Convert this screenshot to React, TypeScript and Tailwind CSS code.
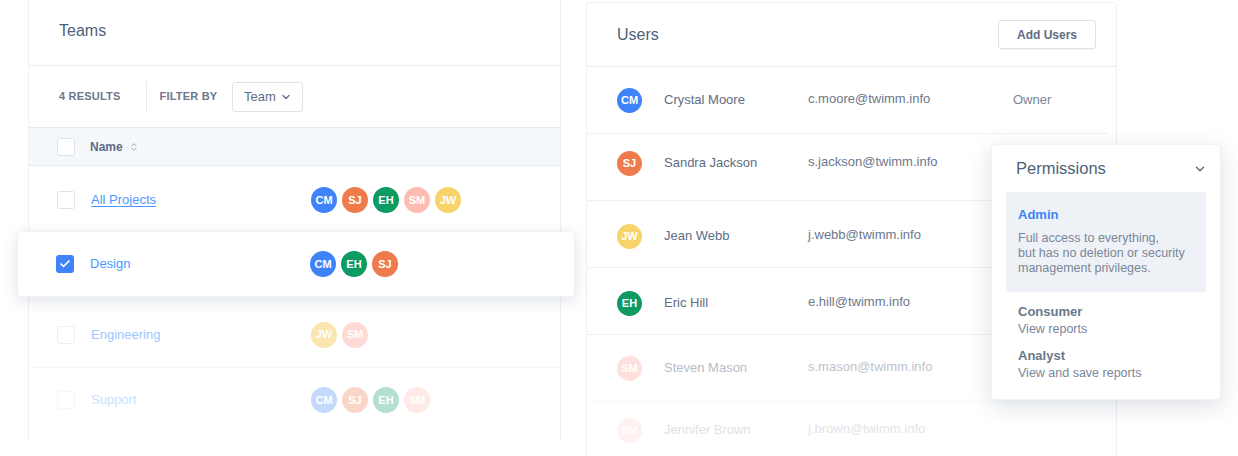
import { Check, ChevronDown, ChevronsUpDown } from "lucide-react";

type Person = { initials: string; color: string };

const people: Record<string, Person> = {
  CM: { initials: "CM", color: "bg-[#3f83f8]" },
  SJ: { initials: "SJ", color: "bg-[#ef7b4d]" },
  EH: { initials: "EH", color: "bg-[#0d9a63]" },
  SM: { initials: "SM", color: "bg-[#ffbcb2]" },
  JW: { initials: "JW", color: "bg-[#f7d36c]" },
};

const Avatar = ({ id, size = "lg" }: { id: string; size?: "lg" | "md" }) => {
  const p = people[id];
  return (
    <div
      className={`${p.color} ${size === "lg" ? "w-[26px] h-[26px]" : "w-[25px] h-[25px]"} rounded-full flex items-center justify-center text-white text-[11px] font-bold shrink-0`}
    >
      {p.initials}
    </div>
  );
};

const Checkbox = ({ checked = false }: { checked?: boolean }) =>
  checked ? (
    <div className="w-[18px] h-[18px] rounded-[3px] bg-[#3f83f8] flex items-center justify-center">
      <Check className="w-[12px] h-[12px] text-white" strokeWidth={3.5} />
    </div>
  ) : (
    <div className="w-[18px] h-[18px] rounded-[3px] border border-[#dde3ea] bg-white" />
  );

const teams = [
  { name: "All Projects", members: ["CM", "SJ", "EH", "SM", "JW"], link: true },
  { name: "Design", members: ["CM", "EH", "SJ"], selected: true },
  { name: "Engineering", members: ["JW", "SM"] },
  { name: "Support", members: ["CM", "SJ", "EH", "SM"] },
];

const users = [
  { id: "CM", name: "Crystal Moore", email: "c.moore@twimm.info", role: "Owner", fade: "", pos: "" },
  { id: "SJ", name: "Sandra Jackson", email: "s.jackson@twimm.info", role: "", fade: "", pos: "-translate-y-[4px]" },
  { id: "JW", name: "Jean Webb", email: "j.webb@twimm.info", role: "", fade: "", pos: "translate-y-[2px]" },
  { id: "EH", name: "Eric Hill", email: "e.hill@twimm.info", role: "", fade: "", pos: "translate-y-[2px]" },
  { id: "SM", name: "Steven Mason", email: "s.mason@twimm.info", role: "", fade: "opacity-45", pos: "" },
  { id: "SM", name: "Jennifer Brown", email: "j.brown@twimm.info", role: "", fade: "opacity-20", pos: "-translate-y-[5px]" },
];

const TeamsPanel = () => (
  <div className="ml-[28px] w-[533px] h-[440px] border-x border-[#eef1f5] bg-white shrink-0">
    <div className="h-[66px] border-b border-[#e8edf3] pl-[30px] pt-[21px]">
      <h2 className="text-[16px] text-[#505f79] leading-[20px]">Teams</h2>
    </div>
    <div className="h-[61px] flex items-center pl-[30px]">
      <span className="text-[11px] font-bold text-[#6b778c] tracking-[0.2px]">4 RESULTS</span>
      <div className="w-px h-[32px] bg-[#e6ebf0] ml-[25px] mr-[13px]" />
      <span className="text-[11px] font-bold text-[#6b778c] tracking-[0.2px]">FILTER BY</span>
      <button className="ml-[15px] w-[71px] h-[30px] rounded-[3px] border border-[#dfe3e9] flex items-center justify-center gap-[4px] text-[13px] text-[#5e6c84]">
        Team
        <ChevronDown className="w-[12px] h-[12px] text-[#5e6c84]" strokeWidth={2.5} />
      </button>
    </div>
    <div className="h-[39px] bg-[#f4f8fb] border-y border-[#e3eaf1] flex items-center pl-[28px]">
      <Checkbox />
      <span className="ml-[15px] text-[12px] font-bold text-[#5e6c84]">Name</span>
      <ChevronsUpDown className="ml-[6px] w-[10px] h-[10px] text-[#8993a4]" strokeWidth={2} />
    </div>
    {teams.map((t, i) => {
      const rowClass = t.selected
        ? "relative -ml-[12px] -mr-[15px] h-[66px] rounded-[4px] bg-white shadow-[0_4px_16px_rgba(40,55,90,0.14)] border border-[#eef1f5] pl-[38px]"
        : i === 2
        ? "h-[66px] mt-[5px] pl-[28px] opacity-55 border-b border-[#f1f3f6]"
        : i === 3
        ? "h-[64px] pl-[28px] opacity-30"
        : "h-[65px] pl-[28px] pt-[3px]";
      return (
        <div key={t.name} className={`flex items-center ${rowClass}`}>
          <Checkbox checked={t.selected} />
          <span
            className={`ml-[16px] w-[220px] text-[13px] text-[#4c9aff] ${t.link ? "underline underline-offset-2" : ""}`}
          >
            {t.name}
          </span>
          <div className="flex gap-[5px]">
            {t.members.map((m) => (
              <Avatar key={m} id={m} />
            ))}
          </div>
        </div>
      );
    })}
  </div>
);

const UsersPanel = () => (
  <div className="ml-[25px] mt-[2px] w-[531px] h-[454px] border-x border-t border-[#eef1f5] rounded-t-[4px] bg-white shrink-0">
    <div className="h-[64px] border-b border-[#e8edf3] flex items-center justify-between pl-[30px] pr-[20px]">
      <h2 className="text-[16px] text-[#505f79]">Users</h2>
      <button className="w-[98px] h-[29px] rounded-[3px] border border-[#dce2e8] shadow-[0_1px_1px_rgba(0,0,0,0.04)] text-[12px] font-bold text-[#5e6c84]">
        Add Users
      </button>
    </div>
    {users.map((u) => (
      <div
        key={u.name}
        className={`h-[67px] mr-[8px] border-b border-[#edf1f5] flex items-center pl-[30px] ${u.fade}`}
      >
        <div className={`flex items-center ${u.pos}`}>
          <Avatar id={u.id} size="md" />
          <span className="ml-[22px] w-[144px] text-[13px] text-[#5e6c84]">{u.name}</span>
          <span className="w-[205px] text-[13px] text-[#6b778c] -translate-y-[1px]">{u.email}</span>
          <span className="text-[13px] text-[#7a869a]">{u.role}</span>
        </div>
      </div>
    ))}
  </div>
);

const PermissionsMenu = () => (
  <div className="absolute left-[991px] top-[144px] w-[230px] h-[256px] rounded-[4px] bg-white border border-[#eef1f5] shadow-[0_6px_22px_rgba(40,55,90,0.16)]">
    <div className="flex items-center justify-between pl-[24px] pr-[13px] h-[47px]">
      <span className="text-[16.5px] text-[#505f79]">Permissions</span>
      <ChevronDown className="w-[14px] h-[14px] text-[#5e6c84]" strokeWidth={2.5} />
    </div>
    <div className="mx-[14px] h-[100px] rounded-[3px] bg-[#eef2f6] px-[12px] pt-[15px]">
      <div className="text-[13px] font-bold text-[#3f83f8] leading-[16px]">Admin</div>
      <p className="mt-[8px] text-[12.5px] text-[#7a869a] leading-[15px]">
        Full access to everything,
        <br />
        but has no deletion or security
        <br />
        management privileges.
      </p>
    </div>
    <div className="px-[26px] pt-[12px]">
      <div className="text-[13px] font-bold text-[#6b778c] leading-[16px]">Consumer</div>
      <div className="text-[12.5px] text-[#7a869a] leading-[18px]">View reports</div>
      <div className="mt-[10px] text-[13px] font-bold text-[#6b778c] leading-[16px]">Analyst</div>
      <div className="text-[12.5px] text-[#7a869a] leading-[18px]">View and save reports</div>
    </div>
  </div>
);

export default function App() {
  return (
    <div className="relative w-[1238px] h-[456px] overflow-hidden bg-white font-['Liberation_Sans',Arial,sans-serif]">
      <div className="flex items-start">
        <TeamsPanel />
        <UsersPanel />
      </div>
      <PermissionsMenu />
    </div>
  );
}
